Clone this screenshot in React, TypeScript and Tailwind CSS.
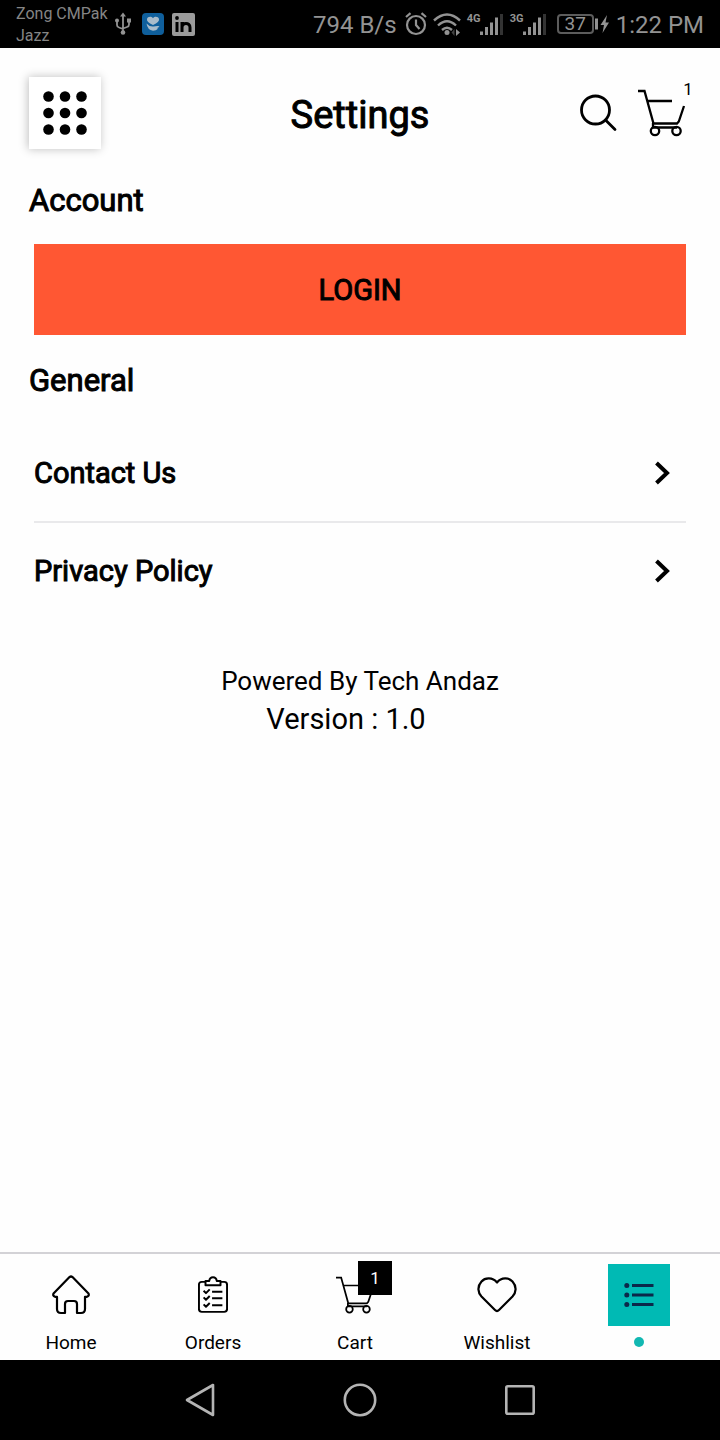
import type { ReactNode } from 'react';

const StatusBar = () => (
  <div className="flex h-12 items-center justify-between bg-black px-4 text-[#939393]">
    <div className="flex items-center">
      <div className="w-[98px] whitespace-nowrap pt-[2px] text-base leading-[22px] text-[#858585]">
        <p>Zong CMPak</p>
        <p>Jazz</p>
      </div>
      <svg className="h-[24px] w-[18px]" viewBox="0 0 18 24" fill="none" stroke="currentColor" strokeWidth="1.8">
        <path d="M9 3v17M3 9v4q0 2 2 2.500L9 17M15 9v3.500q0 2-2 2.500L9 16.500" />
        <path d="M9 .5 12 4.500H6z" fill="currentColor" stroke="none" />
        <circle cx="9" cy="20.500" r="2.300" fill="currentColor" stroke="none" />
        <circle cx="3" cy="8.500" r="2" fill="currentColor" stroke="none" />
        <path d="M13 6.500h4v4h-4z" fill="currentColor" stroke="none" />
      </svg>
      <svg className="ml-[10px] h-[22px] w-[22px]" viewBox="0 0 22 22">
        <rect width="22" height="22" rx="4" fill="#0f5f9c" />
        <path d="M11 12C6.500 10 4.500 8 5 6c.6-2.500 4.200-3 6-.8 1.800-2.200 5.400-1.700 6 .8.500 2-1.500 4-6 6z" fill="#a9bccb" />
        <path d="M4.500 10.500q3 3.500 7 3 3.500-.8 6-.3-1 1.500-2.500 1.800l1 .8q-2 2-5 2-5.500-.8-6.500-7.300z" fill="#a9bccb" />
      </svg>
      <svg className="ml-[8px] h-[23px] w-[23px]" viewBox="0 0 23 23">
        <rect width="23" height="23" rx="2" fill="#9b9b9b" />
        <path d="M5 9v10M10 19V9M10 14.500c0-5.500 8-5.500 8 0V19" fill="none" stroke="#000" strokeWidth="3" />
        <circle cx="5" cy="5" r="1.900" fill="#000" />
      </svg>
    </div>

    <div className="flex items-center text-2xl leading-8">
      <span className="pt-px">794 B/s</span>
      <svg className="ml-2 h-6 w-[22px]" viewBox="0 0 22 24" fill="none" stroke="currentColor" strokeWidth="2.200">
        <circle cx="11" cy="13" r="9" />
        <path d="M11 7.500V13l3.500 4M1 5l4.500-3.800M21 5l-4.500-3.800" />
      </svg>
      <svg className="ml-[6px] h-6 w-7" viewBox="0 0 28 24" fill="none" stroke="currentColor" strokeWidth="2.400">
        <path d="M1 8.500q13-12 26 0M5 13.500q9-8.500 18 0M9 18q5-4.500 10 0" />
        <circle cx="14" cy="20.500" r="2.500" fill="currentColor" stroke="none" />
        <path d="m23 17 4 3.500-4 3.500z" fill="currentColor" stroke="none" />
        <path d="m21.500 17-3 3.500 3 3.500z" fill="#444" stroke="none" />
      </svg>
      <Signal label="4G" />
      <Signal label="3G" />
      <div className="ml-[10px] flex h-5 w-[37px] items-center justify-center rounded-[4px] border-2 border-[#5c5c5c] text-[19px] leading-5">
        37
      </div>
      <svg className="h-5 w-[17px]" viewBox="0 0 17 20" fill="currentColor">
        <path d="M1 4.500h3v11H1zM13 1 6.500 11H10l-1.500 8L15 8.500h-3.500z" />
      </svg>
      <span className="ml-[5px] pt-px">1:22 PM</span>
    </div>
  </div>
);

const Signal = ({ label }: { label: string }) => (
  <div className="ml-[6px] flex h-6 items-start">
    <span className="w-[13px] whitespace-nowrap text-[11px] font-bold leading-[14px]">{label}</span>
    <svg className="h-6 w-[24px]" viewBox="0 0 24 24" fill="currentColor">
      <path d="M0 19.500h3V23H0zM5 15h3v8H5zM10 10.500h3V23h-3zM15 5.500h3V23h-3z" />
      <path d="M20 2h3v21h-3z" fill="#333" />
    </svg>
  </div>
);

const CartIcon = ({ className, strokeWidth }: { className: string; strokeWidth: number }) => (
  <svg className={className} viewBox="0 0 48 48" fill="none" stroke="currentColor" strokeWidth={strokeWidth}>
    <path d="M0 2h6.500L15.500 34.500H39l1.800-2L46 17M9.500 12H34M15 34v4.500h24" />
    <circle cx="17" cy="42" r="4.200" />
    <circle cx="38.500" cy="42" r="4.200" />
  </svg>
);

const Header = () => (
  <header className="grid grid-cols-[1fr_auto_1fr] items-center px-[29px] pt-[29px]">
    <button
      type="button"
      aria-label="Menu"
      className="flex h-[72px] w-[72px] items-center justify-center bg-white shadow-[-1px_0_9px_rgba(0,0,0,0.25)]"
    >
      <svg className="h-11 w-11" viewBox="0 0 44 44" fill="#000">
        {[5.5, 22, 38.5].map((y) =>
          [5.5, 22, 38.5].map((x) => <circle key={`${x}-${y}`} cx={x} cy={y} r="5.300" />),
        )}
      </svg>
    </button>
    <h1 className="pt-1 text-[38px] leading-[48px] [-webkit-text-stroke:1px_black]">Settings</h1>
    <div className="flex items-center justify-end gap-5">
      <button type="button" aria-label="Search">
        <svg className="block h-[38px] w-[38px]" viewBox="0 0 38 38" fill="none" stroke="#000" strokeWidth="2.800">
          <circle cx="15.500" cy="16" r="14" />
          <path d="m25.500 26 9.500 9.500" strokeLinecap="round" />
        </svg>
      </button>
      <a href="#cart" aria-label="Cart, 1 item" className="relative mr-[5px]">
        <CartIcon className="h-12 w-12" strokeWidth={2.3} />
        <span className="absolute -right-[14px] -top-[10px] h-5 w-6 text-center text-[17px] leading-5">1</span>
      </a>
    </div>
  </header>
);

const LinkRow = ({ label }: { label: string }) => (
  <li>
    <a href="#" className="flex items-center justify-between py-7 pr-4">
      <span className="text-[29px] leading-10 [-webkit-text-stroke:1px_black]">{label}</span>
      <svg className="h-6 w-4" viewBox="0 0 16 24" fill="none" stroke="#000" strokeWidth="4">
        <path d="M2.500 2 13 12 2.500 22" />
      </svg>
    </a>
  </li>
);

const NavItem = ({ label, children }: { label: string; children: ReactNode }) => (
  <a href="#" className="flex flex-1 flex-col items-center pt-[10px]">
    <span className="flex h-[62px] w-[62px] items-center justify-center">{children}</span>
    <span className="mt-[5px] text-[19px] leading-6">{label}</span>
  </a>
);

const BottomNav = () => (
  <nav className="flex h-[108px] border-t-2 border-[#d3d2d6] pr-[10px]">
    <NavItem label="Home">
      <svg className="h-10 w-10" viewBox="0 0 40 40" fill="none" stroke="#000" strokeWidth="2.200" strokeLinejoin="round">
        <path d="M18.500 2.100q1.500-1.200 3 0L37.500 18.500q1 2.500-1.500 3.300H34V34q0 4-4 4h-4V29q0-3-3-3h-6q-3 0-3 3v9h-4q-4 0-4-4V21.800H4Q1.500 21 2.500 18.500z" />
      </svg>
    </NavItem>
    <NavItem label="Orders">
      <svg className="h-[38px] w-[30px]" viewBox="0 0 32 40" fill="none" stroke="#000" strokeWidth="2.100" strokeLinejoin="round">
        <path d="M8 6H4q-3 0-3 3v26q0 3 3 3h24q3 0 3-3V9q0-3-3-3h-4" />
        <path d="M8 9.500V5h4q.5-4 4-4t4 4h4v4.500z" />
        <path d="m6 15.500 2.500 2.500 4-4M6 22.500 8.500 25l4-4M6 30l2.500 2.500 4-4M15 16.500h11M15 23.500h11M15 31h11" />
      </svg>
    </NavItem>
    <NavItem label="Cart">
      <span className="relative">
        <CartIcon className="h-[38px] w-[38px]" strokeWidth={2.2} />
        <span className="absolute -right-[18px] -top-[15px] h-[34px] w-[34px] bg-black text-center text-[17px] leading-[34px] text-white">
          1
        </span>
      </span>
    </NavItem>
    <NavItem label="Wishlist">
      <svg className="h-10 w-10" viewBox="0 0 40 40" fill="none" stroke="#000" strokeWidth="2.200" strokeLinejoin="round">
        <path d="M20 7.500C15.500 2 8 2.500 4.500 6.500 0 11.500.8 17.500 4.500 21.500L18 35q2 2 4 0l13.500-13.500c3.700-4 4.500-10 0-15C32 2.500 24.500 2 20 7.500z" />
      </svg>
    </NavItem>
    <a href="#" aria-label="Settings" aria-current="page" className="flex flex-1 flex-col items-center pt-[10px]">
      <span className="flex h-[62px] w-[62px] items-center justify-center bg-[#00bab4]">
        <svg className="h-6 w-[30px]" viewBox="0 0 30 24" stroke="#0b2849" strokeWidth="3">
          <path d="M8 2.500h21.500M8 12h21.500M8 21.500h21.500" />
          <g fill="#0b2849" stroke="none">
            <circle cx="2.800" cy="2.500" r="2.500" />
            <circle cx="2.800" cy="12" r="2.500" />
            <circle cx="2.800" cy="21.500" r="2.500" />
          </g>
        </svg>
      </span>
      <span className="mt-[11px] h-[10px] w-[10px] rounded-full bg-[#12b8b2]" />
    </a>
  </nav>
);

const SystemNav = () => (
  <div className="flex h-20 items-center justify-center gap-[124px] bg-black">
    <button type="button" aria-label="Back">
      <svg className="block h-9 w-9" viewBox="0 0 36 36" fill="none" stroke="#b4b4b4" strokeWidth="2.600" strokeLinejoin="round">
        <path d="M5 18 31 3v30z" />
      </svg>
    </button>
    <button type="button" aria-label="Home">
      <svg className="block h-9 w-9" viewBox="0 0 36 36" fill="none" stroke="#b4b4b4" strokeWidth="2.600">
        <circle cx="18" cy="18" r="15.200" />
      </svg>
    </button>
    <button type="button" aria-label="Recent apps">
      <svg className="block h-9 w-9" viewBox="0 0 36 36" fill="none" stroke="#b4b4b4" strokeWidth="2.600">
        <rect x="4.300" y="4.300" width="27.400" height="27.400" rx="1.500" />
      </svg>
    </button>
  </div>
);

const App = () => {
  return (
    <div className="flex min-h-screen flex-col bg-[#fefefe] font-[Roboto,sans-serif] text-black">
      <StatusBar />
      <Header />

      <main className="flex-1 px-[34px] pt-8">
        <h2 className="-ml-[5px] text-[31px] leading-10 [-webkit-text-stroke:1px_black]">Account</h2>
        <button
          type="button"
          className="mt-[23px] h-[91px] w-full bg-[#ff5733] pt-px text-[29px] leading-10 [-webkit-text-stroke:1px_black]"
        >
          LOGIN
        </button>

        <h2 className="-ml-[5px] mt-[26px] text-[31px] leading-10 [-webkit-text-stroke:1px_black]">General</h2>
        <ul className="mt-6 divide-y-2 divide-[#e9e9eb]">
          <LinkRow label="Contact Us" />
          <LinkRow label="Privacy Policy" />
        </ul>

        <footer className="mt-[43px] text-center">
          <p className="text-[26px] leading-[38px]">Powered By Tech Andaz</p>
          <p className="pr-7 text-[29px] leading-[38px]">Version : 1.0</p>
        </footer>
      </main>

      <BottomNav />
      <SystemNav />
    </div>
  );
};

export default App;
